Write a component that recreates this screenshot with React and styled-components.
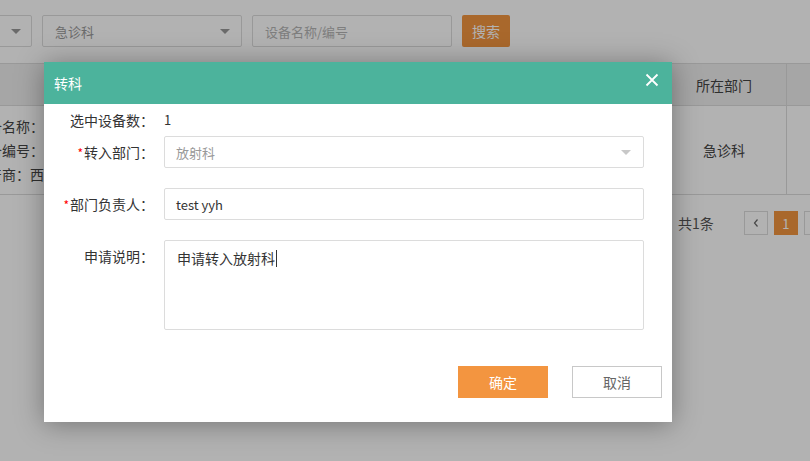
import React from "react";
import styled, { createGlobalStyle } from "styled-components";

const GlobalStyle = createGlobalStyle`
  html, body {
    margin: 0;
    padding: 0;
    background: #fff;
    overflow: hidden;
  }
  body {
    font-family: "Noto Sans CJK SC", "Noto Sans", sans-serif;
    font-size: 14px;
    color: #333;
  }
`;

const Page = styled.div`
  position: relative;
  width: 810px;
  height: 461px;
  overflow: hidden;
  background: #fff;
`;

const Toolbar = styled.div`
  display: flex;
  gap: 10px;
  padding: 15px 0 16px;
  margin-left: -168px;
`;

const SelectBox = styled.div`
  position: relative;
  display: flex;
  align-items: center;
  box-sizing: border-box;
  width: ${(p) => p.$width || 200}px;
  height: 32px;
  padding: 0 12px;
  border: 1px solid #dcdcdc;
  border-radius: 2px;
  background: #fff;
  color: ${(p) => (p.$muted ? "#b5b5b5" : "#999")};
  font-size: 13px;
`;

const Caret = styled.span`
  position: absolute;
  right: ${(p) => p.$right || 12}px;
  top: 50%;
  margin-top: -2px;
  width: 0;
  height: 0;
  border-left: 5px solid transparent;
  border-right: 5px solid transparent;
  border-top: 5px solid ${(p) => p.$color || "#999"};
`;

const SearchButton = styled.button`
  width: 48px;
  height: 32px;
  border: 0;
  border-radius: 2px;
  background: #f39540;
  color: #fff;
  font-family: inherit;
  font-size: 14px;
  padding: 0;
`;

const Table = styled.div`
  margin-left: -26px;
  display: grid;
  grid-template-columns: 688px 125px 60px;
  border-top: 1px solid #dcdcdc;
`;

const HeadCell = styled.div`
  height: 41px;
  display: flex;
  align-items: center;
  justify-content: center;
  background: #eeeeee;
  border-right: 1px solid #dcdcdc;
  border-bottom: 1px solid #dcdcdc;
  color: #444;
  font-size: 14px;
`;

const BodyCell = styled.div`
  height: 88px;
  display: flex;
  flex-direction: column;
  justify-content: center;
  align-items: ${(p) => (p.$left ? "flex-start" : "center")};
  border-right: 1px solid #dcdcdc;
  border-bottom: 1px solid #dcdcdc;
  color: #444;
  font-size: 14px;
  line-height: 24px;
  white-space: nowrap;
`;

const Pager = styled.div`
  display: flex;
  align-items: center;
  gap: 6px;
  width: max-content;
  padding: 16px 0 0 678px;
  white-space: nowrap;
`;

const Total = styled.span`
  color: #555;
  font-size: 14px;
  margin-right: 24px;
`;

const PageBtn = styled.div`
  box-sizing: border-box;
  width: 24px;
  height: 24px;
  display: flex;
  align-items: center;
  justify-content: center;
  border: 1px solid ${(p) => (p.$active ? "#f39540" : "#dcdcdc")};
  background: ${(p) => (p.$active ? "#f39540" : "#fff")};
  color: ${(p) => (p.$active ? "#fff" : "#666")};
  font-size: 13px;
  flex-shrink: 0;
`;

const Mask = styled.div`
  position: absolute;
  inset: 0;
  background: rgba(0, 0, 0, 0.3);
`;

const Modal = styled.div`
  position: absolute;
  left: 44px;
  top: 62px;
  width: 628px;
  height: 360px;
  background: #fff;
  box-shadow: 0 2px 26px rgba(0, 0, 0, 0.35);
  display: flex;
  flex-direction: column;
`;

const ModalHeader = styled.div`
  height: 42px;
  display: flex;
  align-items: center;
  justify-content: space-between;
  padding: 0 12px 0 10px;
  background: #4cb39c;
  color: #fff;
  font-size: 14px;
`;

const CloseBtn = styled.button`
  border: 0;
  background: none;
  padding: 0;
  width: 16px;
  height: 16px;
  display: flex;
  align-items: center;
  justify-content: center;
  margin-top: -6px;
`;

const ModalBody = styled.div`
  display: flex;
  flex-direction: column;
  padding-top: 8px;
`;

const FormRow = styled.div`
  display: flex;
  align-items: flex-start;
  margin-top: ${(p) => p.$mt || 0}px;
`;

const Label = styled.div`
  width: 110px;
  height: ${(p) => p.$lh || 32}px;
  margin-right: 10px;
  text-align: right;
  line-height: ${(p) => p.$lh || 32}px;
  color: #333;
  font-size: 14px;
  white-space: nowrap;
`;

const Star = styled.span`
  color: #f00;
  font-size: 12px;
  line-height: 1;
  margin-right: 1px;
`;

const Value = styled.div`
  line-height: ${(p) => p.$lh || 32}px;
  color: #333;
  font-size: 13px;
`;

const Field = styled.div`
  position: relative;
  box-sizing: border-box;
  width: 480px;
  height: ${(p) => p.$h || 32}px;
  border: 1px solid #dcdcdc;
  border-radius: 2px;
  padding: ${(p) => (p.$area ? "7px 12px" : "0 11px")};
  display: flex;
  align-items: ${(p) => (p.$area ? "flex-start" : "center")};
  color: ${(p) => (p.$placeholder ? "#999" : "#333")};
  font-size: ${(p) => (p.$area ? 14 : 13)}px;
`;

const Cursor = styled.span`
  display: inline-block;
  width: 1px;
  height: 17px;
  background: #333;
  margin-left: 1px;
  vertical-align: -3px;
`;

const Footer = styled.div`
  display: flex;
  justify-content: flex-end;
  gap: 24px;
  padding: 36px 10px 0 0;
`;

const Button = styled.button`
  box-sizing: border-box;
  width: 90px;
  height: 32px;
  border: 1px solid ${(p) => (p.$primary ? "#f39540" : "#c8c8c8")};
  background: ${(p) => (p.$primary ? "#f39540" : "#fff")};
  color: ${(p) => (p.$primary ? "#fff" : "#666")};
  font-family: inherit;
  font-size: 14px;
  padding: 0;
`;

export default function App() {
  return (
    <>
      <GlobalStyle />
      <Page>
        <Toolbar>
          <SelectBox $width={200}>
            <Caret $right={10} />
          </SelectBox>
          <SelectBox $width={200}>
            急诊科
            <Caret $right={11} />
          </SelectBox>
          <SelectBox $width={200} $muted>
            设备名称/编号
          </SelectBox>
          <SearchButton>搜索</SearchButton>
        </Toolbar>

        <Table>
          <HeadCell>设备信息</HeadCell>
          <HeadCell>所在部门</HeadCell>
          <HeadCell />
          <BodyCell $left>
            <span>设备名称：CT机</span>
            <span>设备编号：SB001</span>
            <span>生产商：西门子</span>
          </BodyCell>
          <BodyCell>急诊科</BodyCell>
          <BodyCell />
        </Table>

        <Pager>
          <Total>共1条</Total>
          <PageBtn>
            <svg width="8" height="10" viewBox="0 0 8 10">
              <path d="M5.5 1.5 L2.5 5 L5.5 8.5" fill="none" stroke="#666" strokeWidth="1.2" />
            </svg>
          </PageBtn>
          <PageBtn $active>1</PageBtn>
          <PageBtn>
            <svg width="8" height="10" viewBox="0 0 8 10">
              <path d="M2.5 1.5 L5.5 5 L2.5 8.5" fill="none" stroke="#666" strokeWidth="1.2" />
            </svg>
          </PageBtn>
        </Pager>

        <Mask />

        <Modal>
          <ModalHeader>
            <span>转科</span>
            <CloseBtn>
              <svg width="14" height="14" viewBox="0 0 14 14">
                <path d="M1.5 1.5 L12.5 12.5 M12.5 1.5 L1.5 12.5" stroke="#fff" strokeWidth="1.8" />
              </svg>
            </CloseBtn>
          </ModalHeader>
          <ModalBody>
            <FormRow>
              <Label $lh={16}>选中设备数：</Label>
              <Value $lh={16}>1</Value>
            </FormRow>
            <FormRow $mt={8}>
              <Label>
                <Star>*</Star>转入部门：
              </Label>
              <Field $placeholder>
                放射科
                <Caret $right={12} $color="#c8c8c8" />
              </Field>
            </FormRow>
            <FormRow $mt={20}>
              <Label>
                <Star>*</Star>部门负责人：
              </Label>
              <Field>test yyh</Field>
            </FormRow>
            <FormRow $mt={20}>
              <Label>申请说明：</Label>
              <Field $area $h={90}>
                <span>
                  申请转入放射科
                  <Cursor />
                </span>
              </Field>
            </FormRow>
            <Footer>
              <Button $primary>确定</Button>
              <Button>取消</Button>
            </Footer>
          </ModalBody>
        </Modal>
      </Page>
    </>
  );
}
